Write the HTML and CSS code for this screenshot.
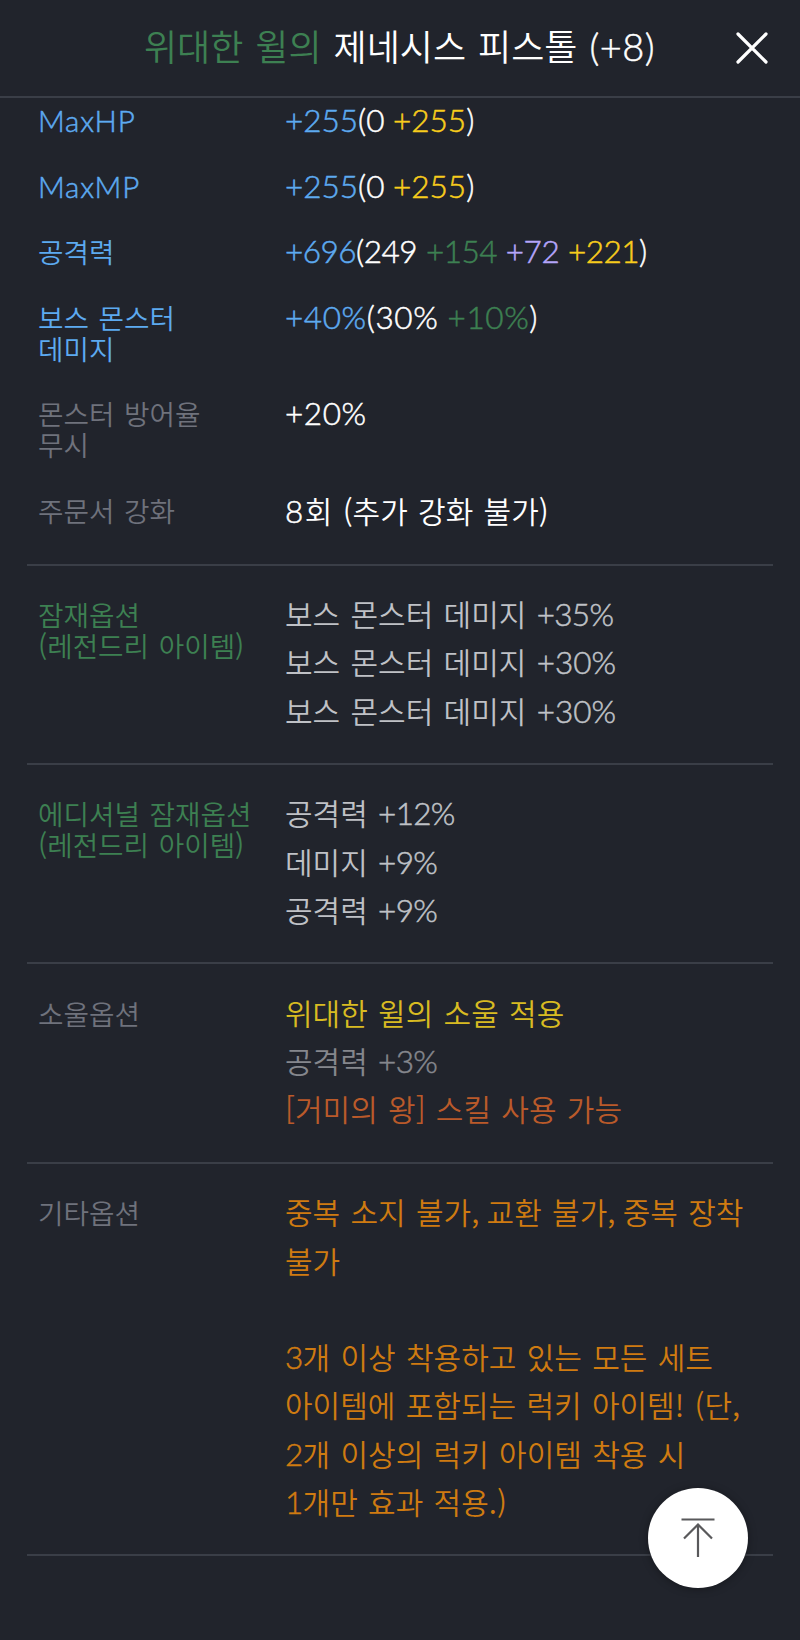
FILE: index.html
```html
<!DOCTYPE html>
<html lang="ko">
<head>
<meta charset="utf-8">
<title>제네시스 피스톨</title>
<link rel="stylesheet" href="styles.css">
</head>
<body>
<header class="header">
  <h1 class="title"><span class="green">위대한 윌의</span> 제네시스 피스톨 <span class="num">(+8)</span></h1>
  <button class="close" aria-label="닫기"><svg width="32" height="32" viewBox="0 0 32 32"><path d="M2 2 30 30M30 2 2 30"/></svg></button>
</header>
<main class="content">
  <dl class="stats">
    <div class="row"><dt class="blue latin">MaxHP</dt><dd class="num hp"><span class="blue">+255</span>(0 <span class="gold">+255</span>)</dd></div>
    <div class="row"><dt class="blue latin">MaxMP</dt><dd class="num hp"><span class="blue">+255</span>(0 <span class="gold">+255</span>)</dd></div>
    <div class="row"><dt class="blue">공격력</dt><dd class="num atk"><span class="blue">+696</span>(249 <span class="green">+154</span> <span class="violet">+72</span> <span class="gold">+221</span>)</dd></div>
    <div class="row"><dt class="blue">보스 몬스터<br>데미지</dt><dd class="num pct"><span class="blue">+40%</span>(30% <span class="green">+10%</span>)</dd></div>
    <div class="row"><dt>몬스터 방어율<br>무시</dt><dd class="num pct">+20%</dd></div>
    <div class="row"><dt>주문서 강화</dt><dd><span class="num count">8</span>회 (추가 강화 불가)</dd></div>
  </dl>
  <section class="option">
    <h2 class="green">잠재옵션<br>(레전드리 아이템)</h2>
    <div class="lines">
      <p>보스 몬스터 데미지 <span class="num">+35%</span></p>
      <p>보스 몬스터 데미지 <span class="num wide">+30%</span></p>
      <p>보스 몬스터 데미지 <span class="num wide">+30%</span></p>
    </div>
  </section>
  <section class="option">
    <h2 class="green">에디셔널 잠재옵션<br>(레전드리 아이템)</h2>
    <div class="lines">
      <p>공격력 <span class="num">+12%</span></p>
      <p>데미지 <span class="num">+9%</span></p>
      <p>공격력 <span class="num">+9%</span></p>
    </div>
  </section>
  <section class="option">
    <h2>소울옵션</h2>
    <div class="lines">
      <p class="yellow">위대한 윌의 소울 적용</p>
      <p class="dim">공격력 <span class="num">+3%</span></p>
      <p class="rust">[거미의 왕] 스킬 사용 가능</p>
    </div>
  </section>
  <section class="option">
    <h2>기타옵션</h2>
    <div class="lines orange">
      <p>중복 소지 불가<span class="comma">,</span> 교환 불가<span class="comma">,</span> 중복 장착<br>불가</p>
      <p><br><span class="num">3</span>개 이상 착용하고 있는 모든 세트<br>아이템에 포함되는 럭키 아이템! (단,<br><span class="num">2</span>개 이상의 럭키 아이템 착용 시<br><span class="num">1</span>개만 효과 적용.)</p>
    </div>
  </section>
</main>
<button class="to-top" aria-label="맨 위로"><svg width="36" height="42" viewBox="0 0 36 42"><path d="M1.500 2.500h33M18 40V8M4 21.500 18 7.500 32 21.500"/></svg></button>
</body>
</html>
```
FILE: styles.css
```css
* { box-sizing: border-box; margin: 0; padding: 0; }
body {
  height: 1640px;
  overflow: hidden;
  background: #21242c;
  color: #fff;
  font-family: "Noto Sans CJK KR", sans-serif;
  font-weight: 350;
  font-size: 30px;
  word-spacing: 1.9px;
}
button { border: 0; background: none; }
svg { display: block; fill: none; stroke-linecap: round; }
.header {
  display: grid;
  grid-template-columns: 1fr 64px;
  height: 98px;
  border-bottom: 2px solid #3a3e47;
}
.title {
  padding: 0 0 0 144px;
  font-size: 36px;
  font-weight: inherit;
  line-height: 90px;
  white-space: nowrap;
}
.close svg { stroke: #fff; stroke-width: 3.2; }
.num, .latin {
  font-family: Lato, "Noto Sans CJK KR", sans-serif;
  font-weight: 300;
  -webkit-text-stroke: .5px currentColor;
}
.num { font-size: 31.5px; letter-spacing: -.7px; }
span.num { line-height: 0; }
.title .num { font-size: 38px; letter-spacing: .5px; }
.hp { letter-spacing: 0; word-spacing: 0; }
.atk { letter-spacing: -.5px; word-spacing: .8px; }
.pct { letter-spacing: .6px; word-spacing: 0; }
.wide { letter-spacing: 0; }
.count { letter-spacing: 1.5px; }
.comma { letter-spacing: -3px; }
.content { padding: 0 27px; }
.stats { padding: 7px 0 38px; }
.row, .option {
  display: grid;
  grid-template-columns: 247px 1fr;
  padding-left: 11px;
  white-space: nowrap;
}
.row { line-height: 31px; }
.row + .row { margin-top: 34.5px; }
dt, h2 {
  color: #6f727c;
  font-size: 27.7px;
  font-weight: inherit;
  line-height: 31px;
}
dt.latin { font-size: 29.5px; font-weight: 300; letter-spacing: .8px; }
.option {
  padding-top: 23.5px;
  padding-bottom: 29.2px;
  border-top: 2px solid #3a3e47;
}
.option:last-child { border-bottom: 2px solid #3a3e47; }
.option h2 { padding-top: 10px; }
.lines { color: #bfc1c6; line-height: 48.25px; }
.blue { color: #5daaf0; }
.green { color: #3d8052; }
.gold { color: #f8cd1c; }
.violet { color: #b4a5fa; }
.yellow { color: #d8bb22; }
.dim { color: #85878d; }
.rust { color: #ba5a2a; }
.orange { color: #cf7b11; }
.to-top {
  position: fixed;
  left: 648px;
  top: 1488px;
  display: grid;
  place-items: center;
  width: 100px;
  height: 100px;
  border-radius: 50%;
  background: #fff;
  box-shadow: 0 1px 8px rgba(0, 0, 0, .35);
}
.to-top svg { stroke: #59595b; stroke-width: 2.2; stroke-linecap: butt; }
```
